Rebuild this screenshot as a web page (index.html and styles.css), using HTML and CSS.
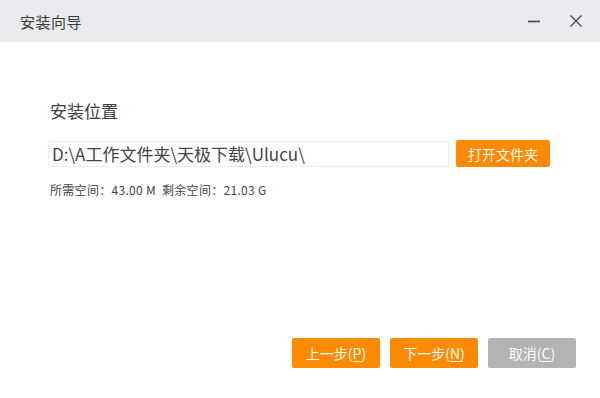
FILE: index.html
```html
<!DOCTYPE html>
<html>
	<head>
		<meta charset="utf-8">
		<title>安装向导</title>
		<link rel="stylesheet" href="styles.css">
	</head>
	<body>
		<section class='wizard'>
			<header class='titlebar'>
				<h1>安装向导</h1>
				<div class='controls'>
					<button class='ctl'>
						<svg width="14" height="14" viewBox="0 0 14 14"><path d="M1 7.5h12" stroke="#444" stroke-width="1.6"/></svg>
					</button>
					<button class='ctl'>
						<svg width="14" height="14" viewBox="0 0 14 14"><path d="M1.5 1.5l11 11M12.5 1.5l-11 11" stroke="#444" stroke-width="1.3"/></svg>
					</button>
				</div>
			</header>
			<main>
				<h2>安装位置</h2>
				<div class='pathrow'>
					<input class='path' type='text' value='D:\A工作文件夹\天极下载\Ulucu\'>
					<button class='btn orange browse'>打开文件夹</button>
				</div>
				<p class='space'>所需空间：43.00 M&nbsp;&nbsp;剩余空间：21.03 G</p>
			</main>
			<footer>
				<button class='btn orange'>上一步(<u>P</u>)</button>
				<button class='btn orange'>下一步(<u>N</u>)</button>
				<button class='btn grey'>取消(<u>C</u>)</button>
			</footer>
		</section>
	</body>
</html>
```

FILE: styles.css
```css
* {
	box-sizing: border-box;
	margin: 0;
	padding: 0;
}
body {
	width: 600px;
	height: 398px;
	background: #fff;
	font-family: "Microsoft YaHei", "Noto Sans CJK SC", sans-serif;
	color: #3c3c3c;
	overflow: hidden;
}
.wizard {
	display: grid;
	grid-template-rows: 42px auto min-content;
	height: 100%;
}
.titlebar {
	display: flex;
	align-items: center;
	justify-content: space-between;
	background: #e9eaee;
	padding: 0 14px 0 20px;
}
.titlebar h1 {
	font-size: 15px;
	font-weight: normal;
	color: #3c3c3c;
	letter-spacing: 0.5px;
}
.controls {
	display: flex;
	gap: 22px;
}
.ctl {
	border: none;
	background: none;
	width: 20px;
	height: 20px;
	display: flex;
	align-items: center;
	justify-content: center;
}
main {
	padding: 57px 50px 0 48px;
}
main h2 {
	font-size: 17px;
	font-weight: normal;
	color: #3c3c3c;
	padding-left: 2px;
	line-height: 24px;
}
.pathrow {
	display: flex;
	align-items: center;
	margin-top: 17px;
	gap: 7px;
}
.path {
	width: 401px;
	height: 26px;
	border: 1px solid #ececec;
	border-radius: 2px;
	font-family: "Microsoft YaHei", "Noto Sans CJK SC", sans-serif;
	font-size: 17px;
	color: #444;
	padding: 0 3px;
	outline: none;
}
.btn {
	border: none;
	border-radius: 2px;
	color: #fff;
	font-family: "Microsoft YaHei", "Noto Sans CJK SC", sans-serif;
	font-size: 14px;
	height: 30px;
	width: 88px;
}
.btn u {
	text-decoration: underline;
	text-underline-offset: 2px;
}
.orange {
	background: #ff8a00;
}
.grey {
	background: #b3b3b3;
}
.browse {
	width: 94px;
	height: 27px;
}
.space {
	font-size: 12px;
	color: #444;
	margin-top: 14px;
	padding-left: 2px;
	letter-spacing: 0.3px;
}
footer {
	display: flex;
	justify-content: flex-end;
	gap: 10px;
	padding: 0 24px 30px 0;
}
```
